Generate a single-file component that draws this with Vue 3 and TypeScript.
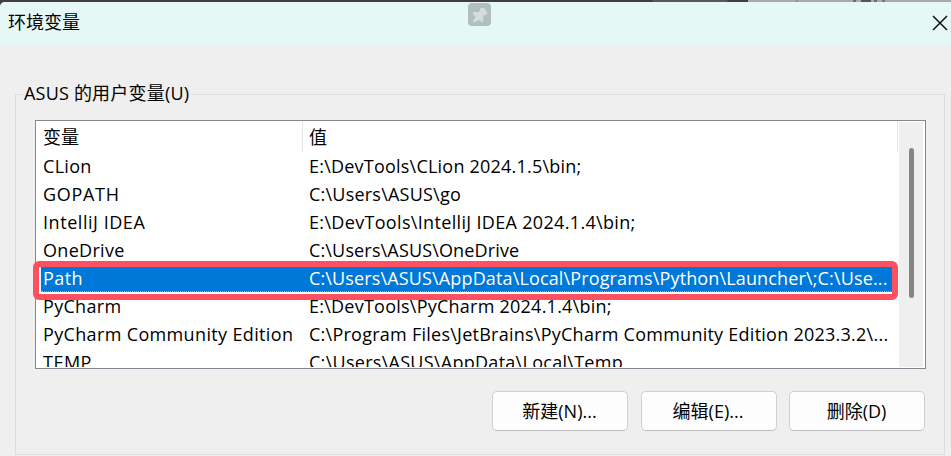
<script setup lang="ts">
interface Variable {
  name: string
  value: string
  nameTracking: number
  valueTracking: number
  selected?: boolean
}

const variables: Variable[] = [
  { name: 'CLion', value: 'E:\\DevTools\\CLion 2024.1.5\\bin;', nameTracking: 0.3, valueTracking: 0.22 },
  { name: 'GOPATH', value: 'C:\\Users\\ASUS\\go', nameTracking: 0.7, valueTracking: 0.22 },
  { name: 'IntelliJ IDEA', value: 'E:\\DevTools\\IntelliJ IDEA 2024.1.4\\bin;', nameTracking: 0.55, valueTracking: 0.33 },
  { name: 'OneDrive', value: 'C:\\Users\\ASUS\\OneDrive', nameTracking: 0.3, valueTracking: 0.15 },
  { name: 'Path', value: 'C:\\Users\\ASUS\\AppData\\Local\\Programs\\Python\\Launcher\\;C:\\Use...', nameTracking: 0.4, valueTracking: 0.14, selected: true },
  { name: 'PyCharm', value: 'E:\\DevTools\\PyCharm 2024.1.4\\bin;', nameTracking: 0.3, valueTracking: 0.24 },
  { name: 'PyCharm Community Edition', value: 'C:\\Program Files\\JetBrains\\PyCharm Community Edition 2023.3.2\\...', nameTracking: 0.35, valueTracking: 0.25 },
  { name: 'TEMP', value: 'C:\\Users\\ASUS\\AppData\\Local\\Temp', nameTracking: 0.5, valueTracking: 0.28 },
]

const actions: string[] = ['新建(N)...', '编辑(E)...', '删除(D)']
</script>

<template>
  <div class="screen">
    <div class="backdrop"><div class="backdrop-dark"></div><div class="backdrop-light"></div></div>
    <section class="dialog">
      <header class="titlebar">
        <h1 class="title">环境变量</h1>
        <svg class="close" width="16" height="16" viewBox="0 0 16 16">
          <path d="M1 1L15 15M15 1L1 15" fill="none" stroke="#111" stroke-width="1.5" />
        </svg>
        <div class="pin">
          <svg width="23" height="23" viewBox="0 0 23 23">
            <path d="M12.6 5h3.4l3 4v2.2l-3.6 1.2-.2 6.6h-1.7l-3-2.2L7 19.2H5.2v-1.6L7.6 14 5 11V9h6z" fill="#d3dddb" />
          </svg>
        </div>
      </header>
      <main class="content">
        <fieldset class="group">
          <legend class="legend">ASUS 的用户变量(U)</legend>
          <div class="list">
            <div class="table">
              <div class="row head">
                <div class="cell name">变量</div>
                <div class="cell value">值</div>
              </div>
              <div v-for="item in variables" :key="item.name" class="row" :class="{ selected: item.selected }">
                <div class="cell name" :style="{ letterSpacing: item.nameTracking + 'px' }">{{ item.name }}</div>
                <div class="cell value" :style="{ letterSpacing: item.valueTracking + 'px' }">{{ item.value }}</div>
              </div>
            </div>
            <div class="scrollbar"><div class="thumb"></div></div>
            <div class="marker"></div>
          </div>
          <div class="actions">
            <button v-for="label in actions" :key="label" class="button" type="button">{{ label }}</button>
          </div>
        </fieldset>
      </main>
    </section>
  </div>
</template>

<style>
body {
  overflow: hidden;
}
</style>

<style scoped>
.screen {
  width: 951px;
  height: 456px;
  overflow: hidden;
  display: flex;
  flex-direction: column;
  box-sizing: border-box;
  background: #403e41;
  color: #000;
  font-family: "Open Sans", "Noto Sans CJK SC", sans-serif;
  font-size: 18px;
}
.backdrop {
  display: flex;
  height: 2px;
  flex: none;
}
.backdrop-dark {
  width: 748px;
  background: linear-gradient(90deg, #403e41 652px, #5a585b 653px 727px, #403e41 728px);
}
.backdrop-light {
  flex: 1;
  background: linear-gradient(90deg, #aaa9ab 48px, #8f8e90 48px 50px, #aaa9ab 50px 105px, #6f6d70 105px 108px, #aaa9ab 108px 113px, #555 113px 123px, #aaa9ab 123px 126px, #6f6d70 126px 129px, #aaa9ab 129px 134px, #777 134px 137px, #aaa9ab 137px);
}
.dialog {
  flex: 1;
  display: flex;
  flex-direction: column;
  min-height: 0;
  background: #efefef;
  border-top-left-radius: 5px;
  overflow: hidden;
}
.titlebar {
  position: relative;
  display: flex;
  align-items: center;
  justify-content: space-between;
  box-sizing: border-box;
  height: 43px;
  flex: none;
  padding: 0 3px 0 8px;
  background: #e5f8f6;
}
.title {
  margin: 0;
  padding-bottom: 3px;
  font-size: 18px;
  font-weight: 400;
  line-height: 26px;
}
.close {
  display: block;
  margin-top: -2px;
}
.pin {
  position: absolute;
  left: 468px;
  top: 1px;
  width: 23px;
  height: 23px;
  border-radius: 4px;
  background: #b2bfbd;
}
.pin svg {
  display: block;
}
.content {
  padding: 35px 6px 0 15px;
}
.group {
  min-width: 0;
  height: 375px;
  margin: 0;
  padding: 0 18px 0 19px;
  box-sizing: border-box;
  border: 1px solid #dcdcdc;
}
.legend {
  margin-left: -12px;
  padding: 0 2px 1px 1px;
  height: 27px;
  line-height: 26px;
  letter-spacing: 0.2px;
  white-space: nowrap;
}
.list {
  position: relative;
  display: flex;
  box-sizing: border-box;
  height: 249px;
  margin-top: 12px;
  padding: 1px;
  border: 1px solid #828790;
  background: #fff;
}
.table {
  width: 862px;
  flex: none;
  height: 245px;
  overflow: hidden;
}
.row {
  display: flex;
  height: 28px;
  line-height: 28px;
  white-space: pre;
}
.cell {
  box-sizing: border-box;
  flex: none;
}
.name {
  width: 266px;
  padding-left: 6px;
}
.value {
  width: 595px;
  padding-left: 6px;
}
.head {
  height: 30px;
  line-height: 31px;
}
.head .cell {
  border-right: 1px solid #e3e3e3;
}
.selected {
  box-sizing: border-box;
  margin: 0 4px;
  color: #fff;
  background: #0078d7;
  border-bottom: 1px dotted #d9a066;
}
.selected .name {
  width: 262px;
  padding-left: 2px;
}
/* Highlight frame drawn over the selected row */
.marker {
  position: absolute;
  left: -3px;
  top: 140px;
  box-sizing: border-box;
  width: 865px;
  height: 39px;
  border: 6px solid #ff5062;
  border-radius: 6px;
}
.scrollbar {
  flex: 1;
  margin-right: 1px;
  padding: 26px 0 0 10px;
  background: #efefef;
}
.thumb {
  width: 5px;
  height: 150px;
  border-radius: 3px;
  background: #858585;
}
.actions {
  display: flex;
  justify-content: flex-end;
  gap: 12.5px;
  margin: 22px 1px 0 0;
}
.button {
  width: 136px;
  height: 40px;
  padding: 0 1px 2px 0;
  box-sizing: border-box;
  border: 1px solid #d0d0d0;
  border-bottom-color: #bcbcbc;
  border-radius: 5px;
  background: #fdfdfd;
  color: #000;
  font: inherit;
}
</style>
